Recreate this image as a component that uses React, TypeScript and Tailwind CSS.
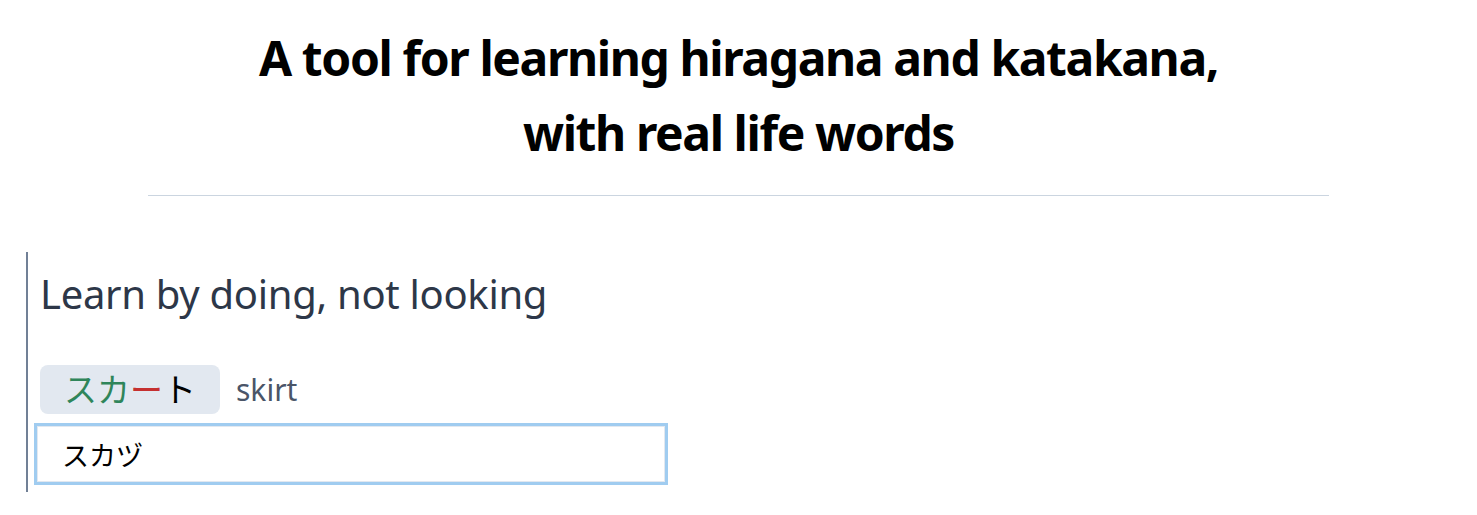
import React, { useState } from 'react';

const font = { fontFamily: '"Noto Sans", "Noto Sans CJK JP", sans-serif' };

const App: React.FC = () => {
  const [answer, setAnswer] = useState('スカヅ');

  return (
    <div className="min-h-screen bg-white text-black" style={font}>
      <header className="pt-[20px]">
        <h1 className="text-center text-[48px] font-bold leading-[75px] tracking-[-1.4px]">
          A tool for learning hiragana and katakana,
          <br />
          with real life words
        </h1>
        <hr className="w-4/5 mx-auto mt-[25px] border-t border-[#cbd5e0]" />
      </header>

      <section className="ml-[26px] mt-14 border-l-2 border-[#718096] pl-3 pt-4 pb-[10px]">
        <h2 className="text-[40px] leading-[52px] text-[#2d3748] tracking-[-0.3px]">Learn by doing, not looking</h2>

        <div className="mt-[45px] flex items-center">
          <span className="rounded-lg bg-[#e2e8f0] px-6 h-[49px] flex items-center text-[33px]">
            <span className="text-[#2f855a]">スカ</span>
            <span className="text-[#c53030]">ー</span>
            <span className="text-black">ト</span>
          </span>
          <span className="ml-4 text-[30px] text-[#4a5568]">skirt</span>
        </div>

        <input
          type="text"
          value={answer}
          onChange={(e) => setAnswer(e.target.value)}
          className="mt-3 -ml-[3px] block w-[628px] h-[56px] border border-[#e2e8f0] px-6 text-[27px] text-black outline-none shadow-[0_0_0_3px_rgba(66,153,225,0.5)]"
        />
      </section>
    </div>
  );
};

export default App;
